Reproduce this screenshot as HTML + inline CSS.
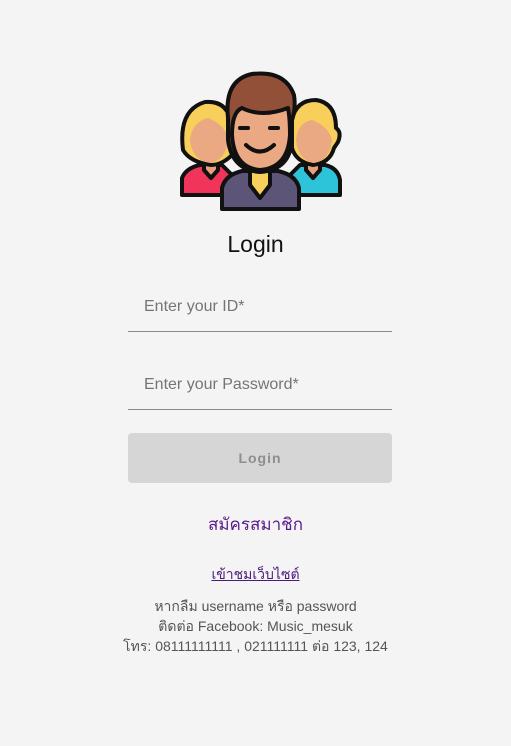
<!DOCTYPE html>
<html><head><meta charset="utf-8"><style>
body{margin:0;background:#f4f4f4;width:511px;height:746px;font-family:"Liberation Sans","DejaVu Sans",sans-serif;position:relative;overflow:hidden}
.abs{position:absolute}
.title{left:0;width:511px;top:231px;text-align:center;font-size:23px;color:#111}
.field{left:128px;width:264px;border-bottom:1px solid #8a8a8a;color:#757575;font-size:16px}
.field span{position:absolute;left:16px}
.btn{left:128px;top:433px;width:264px;height:50px;background:#d6d6d6;border-radius:4px;color:#8e8e8e;font-size:14px;font-weight:bold;letter-spacing:1px;text-align:center;line-height:50px}
.c{left:0;width:511px;text-align:center}
</style></head><body>
<svg class="abs" style="left:170px;top:65px" width="180" height="150" viewBox="170 65 180 150">
<g stroke="#111" stroke-width="4" stroke-linejoin="round" stroke-linecap="round">
<path d="M182 195 L182 178 Q186 168 200 165 L222 165 L232 175 L232 195 Z" fill="#f0345a"/>
<path d="M204 160 L218 160 L218 170 L211 178 L204 170 Z" fill="#e7a17f"/>
<path d="M183 150 Q178 110 205 102 Q228 100 232 125 L232 155 Q222 165 211 165 Q190 162 183 150 Z" fill="#f7cf5a"/>
<path d="M190 140 Q192 122 208 118 Q226 125 228 140 Q226 160 210 163 Q192 160 190 140 Z" fill="#eaa883" stroke="none"/>
<path d="M290 195 L290 175 L300 165 L325 165 Q338 168 340 180 L340 195 Z" fill="#2dc3d8"/>
<path d="M306 160 L320 160 L320 170 L313 178 L306 170 Z" fill="#e7a17f"/>
<path d="M292 120 Q296 100 316 100 Q336 103 336 128 Q342 132 338 142 L334 148 Q330 163 313 165 Q296 162 292 148 Z" fill="#f7cf5a"/>
<path d="M296 140 Q298 122 312 120 Q328 126 332 140 Q330 160 314 163 Q298 160 296 140 Z" fill="#eaa883" stroke="none"/>
<path d="M222 209 L222 188 Q225 175 242 171 L278 171 Q296 175 299 188 L299 209 Z" fill="#5d5578"/>
<path d="M250 170 L270 170 L270 185 L260 198 L250 185 Z" fill="#f7cf5a"/>
<path d="M228 118 Q224 80 252 74 Q285 70 294 95 Q296 108 292 120 L292 140 Q290 170 260 172 Q232 170 228 140 Z" fill="#915037"/>
<path d="M232 135 Q232 112 242 108 Q262 118 288 108 Q290 118 290 135 Q288 168 260 170 Q234 168 232 135 Z" fill="#eaa883"/>
<path d="M240 128 L248 128 M270 128 L278 128" />
<path d="M246 145 Q260 158 274 145" fill="none"/>
</g>
</svg>
<div class="abs title">Login</div>
<div class="abs field" style="top:285px;height:46px"><span style="top:13px">Enter your ID*</span></div>
<div class="abs field" style="top:363px;height:46px"><span style="top:13px">Enter your Password*</span></div>
<div class="abs btn">Login</div>
<div class="abs c" style="top:511px;font-size:17px;color:#5a1a8a">สมัครสมาชิก</div>
<div class="abs c" style="top:564px;font-size:14px;color:#4a1a7a;text-decoration:underline">เข้าชมเว็บไซต์</div>
<div class="abs c" style="top:596px;font-size:14px;color:#555;line-height:20px">หากลืม username หรือ password<br>ติดต่อ Facebook: Music_mesuk<br>โทร: 08111111111 , 021111111 ต่อ 123, 124</div>
</body></html>
